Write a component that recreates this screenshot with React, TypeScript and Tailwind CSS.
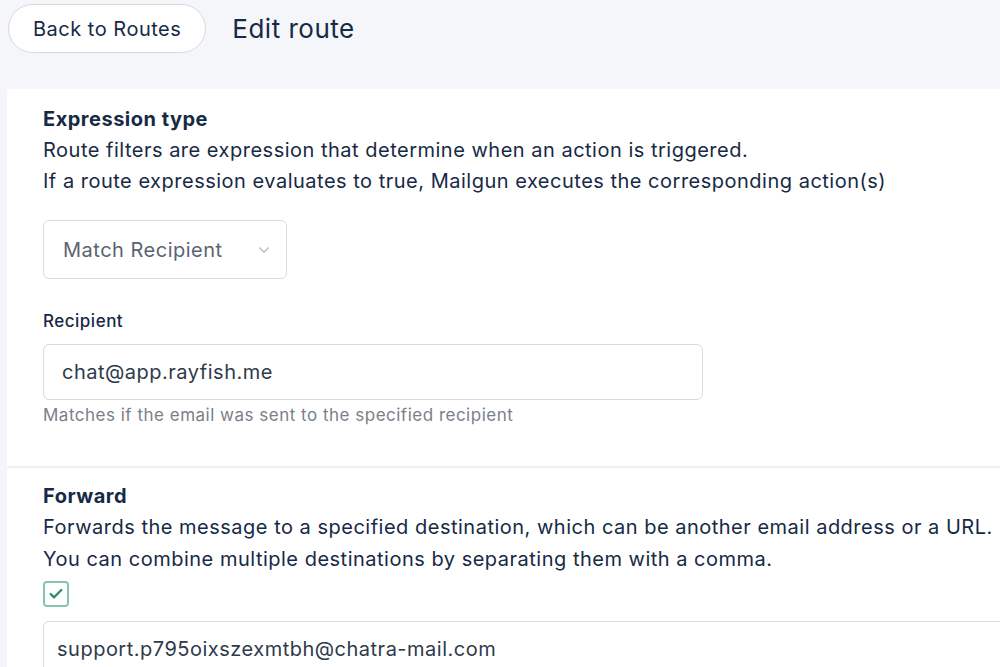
import { Check, ChevronDown } from 'lucide-react'

export default function App() {
  return (
    <div className="min-h-[667px] bg-[#f4f6f9] font-['Inter',sans-serif] tracking-[0.5px] text-[#172a45] overflow-hidden">
      {/* Header */}
      <div className="flex items-start gap-[26px] pl-2 pt-1 h-[89px]">
        <button className="h-[49px] px-[24px] rounded-full border border-[#d5d8dd] bg-white text-[20px] tracking-[0.5px] text-[#172a45]">
          Back to Routes
        </button>
        <h1 className="text-[26px] leading-[49px] text-[#172a45]">Edit route</h1>
      </div>

      {/* Card */}
      <div className="ml-[7px] w-[1100px] bg-white">
        <section className="px-9 pt-[16px] pb-[40px]">
          <h2 className="text-[20px] font-bold leading-[28px]">Expression type</h2>
          <p className="mt-[2px] text-[20px] leading-[31px]">
            Route filters are expression that determine when an action is triggered.
            <br />
            If a route expression evaluates to true, Mailgun executes the corresponding action(s)
          </p>
          <div className="mt-[23px] w-[244px] h-[59px] rounded-[6px] border border-[#d8dbe0] flex items-center justify-between pl-[19px] pr-[13px]">
            <span className="text-[20px] text-[#5b6373]">Match Recipient</span>
            <ChevronDown className="w-[18px] h-[18px] text-[#b3b8c0]" strokeWidth={1.5} />
          </div>

          <label className="block mt-[30px] text-[17px] font-medium leading-[24px] text-[#172a45]">Recipient</label>
          <div className="mt-[11px] w-[660px] h-[56px] rounded-[6px] border border-[#d8dbe0] flex items-center px-[18px]">
            <span className="text-[20px] text-[#2f3a4c]">chat@app.rayfish.me</span>
          </div>
          <p className="mt-[4px] text-[17px] leading-[22px] text-[#7a808a]">
            Matches if the email was sent to the specified recipient
          </p>
        </section>

        <div className="h-[2px] bg-[#eef0f2]" />

        <section className="px-9 pt-[14px]">
          <h2 className="text-[20px] font-bold leading-[28px]">Forward</h2>
          <p className="mt-[1px] text-[20px] leading-[32px]">
            Forwards the message to a specified destination, which can be another email address or a URL.
            <br />
            You can combine multiple destinations by separating them with a comma.
          </p>
          <div className="mt-[6px] w-[26px] h-[26px] rounded-[4px] border-[2.5px] border-[#86c4ab] flex items-center justify-center">
            <Check className="w-4 h-4 text-[#2f8c64]" strokeWidth={3.5} />
          </div>
          <div className="mt-[14px] h-[56px] rounded-[6px] border border-[#d8dbe0] flex items-center px-[13px]">
            <span className="text-[20px] text-[#2f3a4c]">support.p795oixszexmtbh@chatra-mail.com</span>
          </div>
        </section>
      </div>
    </div>
  )
}
